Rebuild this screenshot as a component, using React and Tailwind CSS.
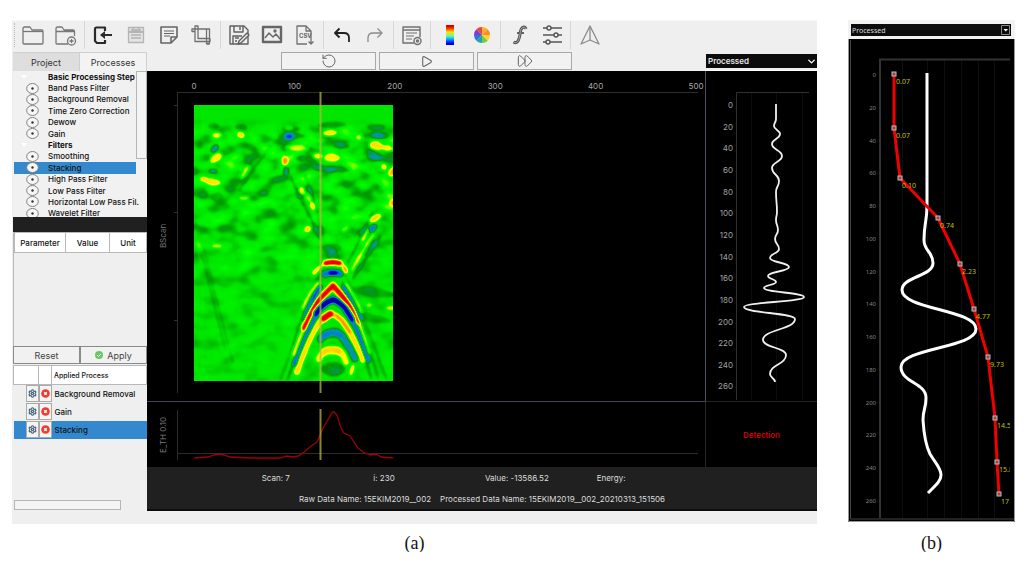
import { useState } from 'react';
import { ChevronDown, RotateCcw, Play, FastForward, Settings } from 'lucide-react';
import clsx from 'clsx';

const PROCESSES = [
    { name: 'Basic Processing Step', group: true },
    { name: 'Band Pass Filter' },
    { name: 'Background Removal' },
    { name: 'Time Zero Correction' },
    { name: 'Dewow' },
    { name: 'Gain' },
    { name: 'Filters', group: true },
    { name: 'Smoothing' },
    { name: 'Stacking' },
    { name: 'High Pass Filter' },
    { name: 'Low Pass Filter' },
    { name: 'Horizontal Low Pass Fil.' },
    { name: 'Wavelet Filter' },
];

const APPLIED = ['Background Removal', 'Gain', 'Stacking'];

const DEPTHS = Array.from({ length: 14 }, (_, i) => i * 20);

const TRACE = [
    [776, 104], [776, 119], [774, 126], [780, 134], [772, 144], [782, 156], [772, 168], [779, 181],
    [776, 192], [777, 212], [776, 220], [778, 230], [775, 239], [779, 249], [770, 258], [789, 267],
    [768, 276], [776, 282], [764, 288], [804, 297], [744, 307], [795, 319], [763, 340], [786, 355],
    [770, 374], [775, 382],
];

const GAIN_TRACE = [
    [927, 73], [927, 205], [924, 240], [933, 263], [902, 290], [976, 329], [901, 367], [926, 398],
    [923, 420],
];

const GAIN_POINTS = [
    { x: 894, y: 74, label: '0.07' },
    { x: 894, y: 128, label: '0.07' },
    { x: 900, y: 178, label: '0.10' },
    { x: 938, y: 218, label: '0.74' },
    { x: 960, y: 264, label: '2.23' },
    { x: 974, y: 309, label: '4.77' },
    { x: 988, y: 357, label: '9.73' },
    { x: 995, y: 418, label: '14.5' },
    { x: 997, y: 462, label: '15.8' },
    { x: 999, y: 494, label: '17' },
];

// x, y, rx, ry, angle, strength (positive = towards red, negative = towards blue)
const BLOBS = [
    [217, 135, 5, 3, 0, 0.35], [241, 135, 4, 3, 20, 0.45], [216, 158, 7, 4, -35, 0.45], [213, 182, 8, 3, 10, 0.36],
    [204, 179, 3, 2, 0, 0.4], [285, 161, 3, 4, 0, 0.55], [297, 148, 12, 3, 5, 0.3], [289, 128, 4, 2, 0, 0.3],
    [330, 133, 7, 3, -5, 0.45], [332, 158, 8, 4, 0, 0.42], [318, 156, 5, 3, 0, 0.38], [359, 137, 3, 3, 0, 0.3],
    [376, 146, 7, 4, 10, 0.45], [387, 148, 6, 3, 15, 0.35], [392, 172, 3, 5, 25, 0.5], [384, 167, 3, 3, 0, 0.45],
    [302, 191, 3, 4, -20, 0.48], [308, 197, 3, 6, -30, 0.33], [313, 206, 3, 4, -25, 0.48], [308, 229, 3, 3, 0, 0.48],
    [375, 218, 7, 3, -25, 0.5], [365, 235, 2, 7, 30, 0.4], [244, 198, 5, 2, 0, 0.35], [245, 172, 2, 8, 30, 0.3],
    [392, 203, 2, 3, 0, 0.5], [345, 229, 4, 2, -30, 0.3], [217, 246, 5, 2, 0, 0.3], [199, 246, 2, 5, -20, 0.3],
    [369, 305, 3, 2, 0, 0.35], [390, 308, 4, 2, 0, 0.35], [352, 370, 2, 6, 15, 0.45], [345, 270, 3, 4, -20, 0.45],
    [215, 148, 5, 3, -50, -0.38], [213, 171, 4, 2, 0, -0.35], [289, 137, 4, 3, 0, -0.42], [286, 171, 3, 4, 0, -0.32],
    [377, 136, 6, 3, 0, -0.28], [373, 228, 5, 3, -50, -0.45], [213, 126, 6, 3, 0, -0.15], [241, 127, 6, 3, 0, -0.18],
    [291, 129, 9, 3, 0, -0.12], [291, 136, 14, 3, 0, -0.14], [332, 125, 14, 3, 0, -0.16], [332, 145, 18, 3, 5, -0.16],
    [376, 127, 9, 3, 0, -0.16], [377, 136, 12, 4, 0, -0.12], [376, 157, 9, 3, 0, -0.18], [217, 197, 6, 5, 0, -0.13],
    [332, 169, 20, 3, 5, -0.18], [300, 158, 5, 3, 0, -0.15], [380, 190, 5, 4, 30, -0.12], [333, 369, 12, 7, 0, -0.2],
    [372, 292, 22, 5, 8, -0.15], [372, 318, 20, 4, 10, -0.12], [333, 248, 9, 4, 0, -0.15],
];

const ECHOES = [
    // faint flanks of the hyperbola
    { d: 'M281 378C295 345 303 300 333 250C350 280 372 340 386 378', w: 3, v: -0.12 },
    { d: 'M288 378C300 350 308 310 318 288', w: 3, v: -0.2 },
    { d: 'M371 378C362 350 356 310 343 282', w: 3, v: -0.18 },
    { d: 'M378 378C370 350 362 322 352 292', w: 2, v: -0.18 },
    { d: 'M292 180C302 205 312 216 320 240', w: 3, v: -0.17 },
    { d: 'M305 175C312 195 318 210 324 240', w: 2, v: -0.17 },
    { d: 'M198 243C208 270 216 320 226 350', w: 2, v: -0.12 },
    { d: 'M204 250C212 280 222 325 233 362', w: 2, v: -0.1 },
    { d: 'M348 262C358 245 364 230 372 214', w: 3, v: -0.18 },
    { d: 'M353 278C364 262 370 252 380 236', w: 3, v: -0.18 },
    { d: 'M352 270C360 256 366 245 373 235', w: 3, v: 0.38 },
    { d: 'M240 190C250 172 262 160 270 146', w: 3, v: -0.12 },
    // main echo, top to bottom
    { d: 'M314 273Q320 266 325 264L341 263L346 271', w: 4, v: 0.4 },
    { d: 'M326 263Q333 261 339 263', w: 6, v: 0.85 },
    { d: 'M325 274Q333 271 340 274', w: 6, v: -0.5 },
    { d: 'M331 273L335 273', w: 4, v: -0.6 },
    { d: 'M303 308Q309 293 318 283', w: 3, v: 0.45 },
    { d: 'M346 284Q354 294 361 312', w: 3, v: 0.42 },
    { d: 'M304 320Q311 300 320 287', w: 4, v: -0.5 },
    { d: 'M343 287Q354 302 360 320', w: 4, v: -0.45 },
    { d: 'M295 354Q306 322 319 299L333 284L345 298Q357 314 368 352', w: 5, v: 0.42 },
    { d: 'M304 328Q313 306 321 298L333 286L345 300Q352 308 357 322', w: 6, v: 0.8 },
    { d: 'M295 364Q307 330 319 309L333 299L345 307Q357 324 368 360', w: 5, v: -0.48 },
    { d: 'M316 313Q324 301 333 300Q342 301 352 319', w: 6, v: -0.65 },
    { d: 'M297 372Q308 338 320 322L331 313L342 320Q354 337 363 360', w: 6, v: 0.48 },
    { d: 'M324 318L330 314', w: 7, v: 0.8 },
    { d: 'M337 315L350 332', w: 4, v: 0.35 },
    { d: 'M321 339Q332 326 342 336Q350 347 355 358', w: 7, v: -0.36 },
    { d: 'M325 335L339 335', w: 6, v: -0.16 },
    { d: 'M319 359Q324 348 332 349Q342 349 346 362', w: 7, v: 0.36 },
    { d: 'M325 352L338 351', w: 8, v: 0.25 },
];

// Curve through turning points with a vertical tangent at each one
const tracePath = (points) =>
    points
        .map(([x, y], i) => {
            if (i === 0) return `M${x} ${y}`;
            const [px, py] = points[i - 1];
            const mid = (py + y) / 2;
            return `C${px} ${mid} ${x} ${mid} ${x} ${y}`;
        })
        .join('');

const tone = (v) => (v > 0 ? '#fff' : '#000');

const icons = {
    open: (
        <g stroke="#777" strokeWidth="1.3">
            <path d="M1 19V4.500q0-1.500 1.500-1.500H8l2 3h9.500q1.500 0 1.500 1.500V19q0 1-1 1H2q-1 0-1-1z" />
            <path d="M1 7.500h20" />
        </g>
    ),
    add: (
        <g stroke="#777" strokeWidth="1.300">
            <path d="M13 20H2q-1 0-1-1V4.500Q1 3 2.500 3H7l2 3h9q1.500 0 1.500 1.500V12M1 7.500h18" />
            <circle cx="16.500" cy="17" r="4" />
            <path d="M14.500 17h4M16.500 15v4" />
        </g>
    ),
    exit: (
        <g stroke="#2b2b2b" strokeWidth="2.200">
            <path d="M13 7V3.500H4Q3 3.500 3 5v12l2 2h8v-3" />
            <path d="M9 11h11" strokeWidth="2" />
            <path d="M13 7l-5 4 5 4z" fill="#2b2b2b" stroke="none" />
        </g>
    ),
    save: (
        <g stroke="#b4b4b4" strokeWidth="1.300">
            <path d="M3.500 3.500h15v15h-15z" fill="#e3e3e3" />
            <path d="M6 6h10M8 4v3h6V4M6 11h10M6 14h10" />
            <path d="M3 8h16" strokeWidth="2" />
        </g>
    ),
    note: (
        <g stroke="#666" strokeWidth="1.600">
            <path d="M3 3h16v10l-6 6H3z" />
            <path d="M19 13h-6v6" />
            <path d="M6 7h10M6 9.500h10M6 12h6" strokeWidth="1.200" />
        </g>
    ),
    crop: (
        <g stroke="#707070" strokeWidth="1.300">
            <path d="M4 2h3v12.500h12v3H4zM1 5h14.500v14.500h3V5H1z" />
            <path d="M1 5v2.500h3M15.500 20h3" />
        </g>
    ),
    saveEdit: (
        <g stroke="#606060" strokeWidth="1.400">
            <path d="M2 2h14l4 4v14H2z" />
            <path d="M6 2v6h9V2M12 3v3M5 20v-8h9" />
            <path d="M19 9l-8 8-1 3 3-1 8-8z" fill="#e8e8e8" />
            <path d="M7 14h4M7 17h2" />
        </g>
    ),
    image: (
        <g stroke="#666" strokeWidth="1.400">
            <path d="M2 3h18v15H2z" strokeWidth="2.400" />
            <path d="M4 14l4-5 4 4 3-3 4 5" />
            <circle cx="14" cy="7" r="1" />
        </g>
    ),
    csv: (
        <g stroke="#707070" strokeWidth="1.300">
            <path d="M13 20H3V2h9l5 5v7M12 2v5h5" />
            <text x="5" y="14" fontSize="6" fontWeight="700" fill="#666" stroke="none">CSV</text>
            <path d="M17 14v6M14.500 17.500L17 20l2.500-2.500" />
        </g>
    ),
    undo: (
        <g stroke="#222" strokeWidth="1.800">
            <path d="M5 9h8q5 0 5 5v4" />
            <path d="M8.500 4.500L4 9l4.500 4.500" />
        </g>
    ),
    redo: (
        <g stroke="#8a8a8a" strokeWidth="1.300">
            <path d="M17 9H9q-5 0-5 5v4" />
            <path d="M13.500 4.500L18 9l-4.500 4.500" />
        </g>
    ),
    form: (
        <g stroke="#707070" strokeWidth="1.400">
            <path d="M13 19H2V3h17v10M2 6h17" />
            <path d="M5 9h11M5 12h8M5 15h6" strokeWidth="1.200" />
            <circle cx="16.500" cy="17" r="3.500" />
            <circle cx="16.500" cy="17" r="1" />
        </g>
    ),
    colorbar: (
        <g>
            <defs>
                <linearGradient id="jet" x1="0" y1="0" x2="0" y2="1">
                    <stop offset="0" stopColor="#b00000" />
                    <stop offset=".15" stopColor="#ff2000" />
                    <stop offset=".35" stopColor="#ffe000" />
                    <stop offset=".55" stopColor="#60ffa0" />
                    <stop offset=".72" stopColor="#00a0ff" />
                    <stop offset=".9" stopColor="#0000ff" />
                    <stop offset="1" stopColor="#0000b0" />
                </linearGradient>
            </defs>
            <path d="M8 1h8v20H8z" fill="url(#jet)" />
        </g>
    ),
    wheel: (
        <g>
            <path d="M11 11V3a8 8 0 0 1 5.700 2.300z" fill="#ffb02e" />
            <path d="M11 11l5.700-5.700A8 8 0 0 1 19 11z" fill="#ff8a1f" />
            <path d="M11 11h8a8 8 0 0 1-2.300 5.700z" fill="#ffd52e" />
            <path d="M11 11l5.700 5.700A8 8 0 0 1 11 19z" fill="#7ac943" />
            <path d="M11 11v8a8 8 0 0 1-5.700-2.300z" fill="#1fa8a0" />
            <path d="M11 11l-5.700 5.700A8 8 0 0 1 3 11z" fill="#2f6fe0" />
            <path d="M11 11H3a8 8 0 0 1 2.300-5.700z" fill="#7b3fd0" />
            <path d="M11 11L5.300 5.300A8 8 0 0 1 11 3z" fill="#f0443a" />
        </g>
    ),
    func: (
        <g stroke="#555">
            <path d="M18 5q-1-3-3.500-1.500C12 5 12.500 9 11.500 13S9 20 5.500 18" strokeWidth="3" />
            <path d="M9 9h7" strokeWidth="1.800" />
            <path d="M18 5q-1-3-3.500-1.500C12 5 12.500 9 11.500 13S9 20 5.500 18" stroke="#bbb" strokeWidth=".800" />
        </g>
    ),
    sliders: (
        <g stroke="#555" strokeWidth="1.400">
            <path d="M2 4h4M10 4h11M2 11h11M17 11h4M2 18h3M9 18h12" />
            <circle cx="8" cy="4" r="2" />
            <circle cx="15" cy="11" r="2" />
            <circle cx="7" cy="18" r="2" />
        </g>
    ),
    nav: (
        <g stroke="#8c8c8c" strokeWidth="1.300">
            <path d="M12 2L3 20l9-4 9 4z" />
            <path d="M12 2v14" />
        </g>
    ),
};

const TOOL_GROUPS = [
    [['open', 'Open'], ['add', 'New project']],
    [['exit', 'Export'], ['save', 'Save'], ['note', 'Notes'], ['crop', 'Crop']],
    [['saveEdit', 'Save as'], ['image', 'Save image'], ['csv', 'Save CSV']],
    [['undo', 'Undo'], ['redo', 'Redo']],
    [['form', 'Header']],
    [['colorbar', 'Colour bar'], ['wheel', 'Colour map']],
    [['func', 'Function'], ['sliders', 'Settings']],
    [['nav', 'Navigation']],
];

const Toolbar = () => (
    <div className="flex h-8 items-center border-t border-[#f8f8f8] pb-[3px]">
        <div className="ml-[2px] h-6 w-[3px] border-l border-dotted border-[#bbb]"></div>
        {TOOL_GROUPS.map((group, i) => (
            <div
                key={i}
                className={clsx('flex h-[28px] items-center gap-px', i > 0 && 'ml-[2px] border-l border-[#d6d6d6] pl-[2px]')}
            >
                {group.map(([name, label]) => (
                    <button key={name} aria-label={label} className="flex w-8 justify-center">
                        <svg width="22" height="22" viewBox="0 0 22 22" fill="none" strokeLinejoin="round">
                            {icons[name]}
                        </svg>
                    </button>
                ))}
            </div>
        ))}
    </div>
);

const ProcessTree = ({ selected, onSelect }) => (
    <div className="flex h-[146px] overflow-hidden bg-[#f1f1f1]">
        <ul className="ml-px flex h-[148px] min-w-0 flex-1 flex-col">
            {PROCESSES.map(({ name, group }) => (
                <li key={name} className="min-h-0 flex-1">
                    <button
                        onClick={() => onSelect(name)}
                        className={clsx(
                            'flex h-full w-full items-center whitespace-nowrap text-left',
                            group ? 'font-bold' : 'font-medium',
                            selected === name && 'bg-[#3489ce]'
                        )}
                    >
                        <span className="flex w-[34px] shrink-0 justify-end pr-[9px]">
                            {group ? (
                                <svg width="6" height="6" viewBox="0 0 6 6" className="mr-[12px]">
                                    <path d="M0 1h6L3 5z" fill="#fff" />
                                </svg>
                            ) : (
                                <svg width="13" height="11" viewBox="0 0 13 11" className="shrink-0">
                                    <ellipse cx="6.5" cy="5.500" rx="5.800" ry="5" fill="#f6f6f6" stroke="#808080" />
                                    <circle cx="6.500" cy="5.500" r="1.200" fill="#333" />
                                </svg>
                            )}
                        </span>
                        {name}
                    </button>
                </li>
            ))}
        </ul>
        <div className="w-[11px]">
            <div className="h-[88px] border border-[#b5b5b5] bg-[#f4f4f4]"></div>
        </div>
    </div>
);

const Sidebar = () => {
    const [tab, setTab] = useState('Processes');
    const [selected, setSelected] = useState('Stacking');

    return (
        <aside className="flex flex-col pl-px">
            <div role="tablist" className="grid h-[19px] grid-cols-2 text-[9px] text-[#333]">
                {['Project', 'Processes'].map(name => (
                    <button
                        key={name}
                        role="tab"
                        aria-selected={tab === name}
                        onClick={() => setTab(name)}
                        className={clsx(
                            'border-r border-t border-[#cfcfcf]',
                            tab === name ? 'bg-[#f3f3f3]' : 'bg-[#dedede]'
                        )}
                    >
                        {name}
                    </button>
                ))}
            </div>

            <ProcessTree selected={selected} onSelect={setSelected} />
            <div className="h-[15px] bg-[#202020]"></div>

            {/* Parameters */}
            <div className="h-[114px] border-l border-[#b8b8b8]">
                <table className="w-full table-fixed border-collapse">
                    <thead>
                        <tr className="h-[20px] bg-white">
                            <th className="w-[51px] border border-[#b8b8b8] font-medium">Parameter</th>
                            <th className="border border-[#b8b8b8] font-medium">Value</th>
                            <th className="w-[37px] border border-[#b8b8b8] font-medium">Unit</th>
                        </tr>
                    </thead>
                </table>
            </div>
            <div className="grid h-[18px] grid-cols-2 text-[9px] text-[#444]">
                <button className="border border-[#8a8a8a] bg-[#f1f1f1]">Reset</button>
                <button className="flex items-center justify-center gap-1 border border-[#8a8a8a] bg-[#f1f1f1]">
                    <svg width="8" height="8" viewBox="0 0 8 8">
                        <circle cx="4" cy="4" r="4" fill="#6cc56c" />
                        <path d="M2 4l1.500 1.500L6 3" fill="none" stroke="#e8ffe8" />
                    </svg>
                    Apply
                </button>
            </div>

            {/* Applied processes */}
            <table className="mt-px w-full table-fixed border-collapse">
                <thead>
                    <tr className="h-[19px] bg-white text-[7px]">
                        <th className="w-[25px] border border-[#b8b8b8]"></th>
                        <th className="w-[13px] border border-[#b8b8b8]"></th>
                        <th className="border border-[#b8b8b8] pl-[2px] text-left font-medium">Applied Process</th>
                    </tr>
                </thead>
                <tbody>
                    {APPLIED.map(name => (
                        <tr key={name} className={clsx('h-[18px]', name === 'Stacking' && 'bg-[#3489ce]')}>
                            <td className="p-0">
                                <button
                                    aria-label={`Edit ${name}`}
                                    className="ml-auto flex h-[17px] w-[13px] items-center justify-center border border-[#aaa] bg-[#f4f4f4]"
                                >
                                    <Settings className="h-[9px] w-[9px] text-[#3f6078]" strokeWidth={3} />
                                </button>
                            </td>
                            <td className="p-0">
                                <button
                                    aria-label={`Remove ${name}`}
                                    className="flex h-[17px] w-[13px] items-center justify-center border border-[#aaa] bg-[#f4f4f4]"
                                >
                                    <svg width="9" height="9" viewBox="0 0 9 9">
                                        <circle cx="4.500" cy="4.500" r="4.300" fill="#f6392b" />
                                        <path d="M3.300 3.300l2.400 2.400M5.700 3.300L3.300 5.700" stroke="#fff" strokeWidth="1.600" />
                                    </svg>
                                </button>
                            </td>
                            <td className="p-0 pl-[3px] font-medium">{name}</td>
                        </tr>
                    ))}
                </tbody>
            </table>
            <div className="mb-[14px] ml-px mt-auto h-[10px] w-[107px] border border-[#b5b5b5] bg-[#f4f4f4]"></div>
        </aside>
    );
};

const BScan = () => (
    <svg viewBox="147 71 559 330" className="block h-auto w-full bg-black">
        <defs>
            {/* grey level -> radar palette */}
            <filter id="palette" x="0" y="0" width="1" height="1" colorInterpolationFilters="sRGB">
                <feGaussianBlur stdDeviation="1.2" edgeMode="duplicate" />
                <feComponentTransfer>
                    <feFuncR type="table" tableValues=".3 .08 0 0 0 0 0 0 1 1 1 .95 .85" />
                    <feFuncG type="table" tableValues="0 0 0 .45 .6 .6 .9 1 1 .85 .5 0 0" />
                    <feFuncB type="table" tableValues=".4 .5 .85 .9 .65 0 0 0 0 0 0 0 0" />
                    <feFuncA type="linear" slope="0" intercept="1" />
                </feComponentTransfer>
            </filter>
            <filter id="speckle" x="0" y="0" width="1" height="1" colorInterpolationFilters="sRGB">
                <feTurbulence type="fractalNoise" baseFrequency=".05 .08" numOctaves="2" seed="7" />
                <feColorMatrix values="1.3 0 0 0 -.15  1.3 0 0 0 -.15  1.3 0 0 0 -.15  0 0 0 0 1" />
            </filter>
            <linearGradient id="fade" x1="0" y1="0" x2="0" y2="1">
                <stop offset=".05" stopColor="#000" />
                <stop offset=".12" stopColor="#606060" />
                <stop offset=".4" stopColor="#505050" />
                <stop offset=".7" stopColor="#202020" />
            </linearGradient>
            <mask id="speckleMask">
                <rect x="194" y="105" width="199" height="276" fill="url(#fade)" />
            </mask>
            <clipPath id="scanArea">
                <rect x="194" y="105" width="199" height="276" />
            </clipPath>
        </defs>

        <g stroke="#2c2c2c">
            <path d="M177.500 393V92.500H698" fill="none" />
            <path d="M174 105.500h3M174 212.500h3M174 320.500h3" />
        </g>
        <g fill="#a8a8a8" fontSize="8" textAnchor="middle">
            {[0, 100, 200, 300, 400, 500].map((n, i) => (
                <text key={n} x={194 + i * 100.4} y="89">{n}</text>
            ))}
            <text transform="translate(166 236) rotate(-90)" fill="#777">BScan</text>
        </g>

        <g clipPath="url(#scanArea)">
            <g filter="url(#palette)">
                <rect x="194" y="105" width="199" height="276" fill="#808080" />
                <g mask="url(#speckleMask)">
                    <rect x="194" y="105" width="199" height="276" filter="url(#speckle)" />
                </g>
                {BLOBS.map(([x, y, rx, ry, angle, v], i) => (
                    <ellipse
                        key={i}
                        rx={rx}
                        ry={ry}
                        transform={`translate(${x} ${y}) rotate(${angle})`}
                        fill={tone(v)}
                        fillOpacity={Math.abs(v)}
                    />
                ))}
                {ECHOES.map(({ d, w, v }) => (
                    <path
                        key={d}
                        d={d}
                        fill="none"
                        stroke={tone(v)}
                        strokeOpacity={Math.abs(v)}
                        strokeWidth={w}
                        strokeLinecap="round"
                        strokeLinejoin="round"
                    />
                ))}
            </g>
        </g>

        <path d="M320.500 92v301" stroke="#b4b440" strokeWidth="2" strokeOpacity=".75" />
        <path d="M705.500 71v330" stroke="#4a5260" />
    </svg>
);

const AScan = () => (
    <svg viewBox="706 71 111 330" className="block h-auto w-full bg-black">
        <path d="M736.500 400V92.500H809" fill="none" stroke="#303030" />
        <path d="M751.500 93v307M776.500 93v307M802.500 93v307" stroke="#0c0c0c" />
        <g fill="#a0a0a0" fontSize="8" textAnchor="end">
            {DEPTHS.map((n, i) => (
                <text key={n} x="733" y={108 + i * 21.65}>{n}</text>
            ))}
        </g>
        <path d={tracePath(TRACE)} fill="none" stroke="#f0f0f0" strokeWidth="1.800" />
    </svg>
);

const EnergyPlot = () => (
    <svg viewBox="147 401 559 66" className="block h-auto w-full bg-black">
        <path d="M147 401.500h559" stroke="#3f4856" />
        <path d="M705.500 402v65" stroke="#262626" />
        <path d="M177.500 410v50M177 453.500h521" stroke="#2c2c2c" />
        <text transform="translate(166 435) rotate(-90)" fill="#777" fontSize="8" textAnchor="middle">E_TH 0.10</text>
        <path
            d="M194 458L208 457L214 455L219 454L224 455L230 457L250 458L280 458L287 456L293 457L299 456L303 453L311 446L317 442L320 435L323 428L329 418Q333 410 334 412L337 415L341 428L344 433L350 436L358 448L363 452L370 455L376 454L381 457L393 458"
            fill="none"
            stroke="#a00000"
            strokeWidth="1.300"
        />
        <path d="M320.500 409v51" stroke="#b4b440" strokeWidth="2" strokeOpacity=".75" />
    </svg>
);

const GainPlot = () => (
    <svg viewBox="848 39 167 483" className="block h-auto w-full bg-black font-['Noto_Sans',sans-serif]">
        <defs>
            <clipPath id="gainArea">
                <rect x="880" y="59" width="130" height="459" />
            </clipPath>
        </defs>
        <path d="M850.500 40v479H1014" fill="none" stroke="#444" />
        <path d="M848.500 39v482.500h166V39" fill="none" stroke="#999" />
        <path d="M927.500 60v458M902.500 60v458M944.500 60v458M961.500 60v458M978.500 60v458M994.500 60v458" stroke="#0e0e0e" />
        <path d="M880 518V59.500h130" fill="none" stroke="#333" strokeWidth="2" />
        <g fill="#858585" fontSize="6" textAnchor="end">
            {DEPTHS.map((n, i) => (
                <text key={n} x="876" y={77 + i * 32.75}>{n}</text>
            ))}
        </g>
        <path
            d={tracePath(GAIN_TRACE) + 'C924 436 926 446 930 454C936 464 941 468 941 475C941 481 936 485 928 493'}
            fill="none"
            stroke="#fff"
            strokeWidth="3"
        />
        <polyline points={GAIN_POINTS.map(p => `${p.x},${p.y}`).join(' ')} fill="none" stroke="#f00000" strokeWidth="3" />
        <g clipPath="url(#gainArea)" fill="#c0c000" fontSize="7">
            {GAIN_POINTS.map(p => (
                <text key={p.y} x={p.x + 2} y={p.y + 10}>{p.label}</text>
            ))}
        </g>
        {GAIN_POINTS.map(p => (
            <rect key={p.y} x={p.x - 2} y={p.y - 2} width="4" height="4" fill="#d03030" stroke="#9cc" />
        ))}
    </svg>
);

const StatusBar = () => (
    <div className="bg-[#202020] text-[#dcdcdc]">
        <div className="grid h-[22px] grid-cols-6 items-center">
            <span className="col-start-2 pl-[3px]">Scan: 7</span>
            <span className="pl-[3px]">i: 230</span>
            <span className="pl-[3px]">Value: -13586.52</span>
            <span className="pl-[3px]">Energy:</span>
        </div>
        <div className="flex h-[22px] items-center justify-center gap-[9px] border-b-2 border-[#0c0c0c]">
            <span>Raw Data Name: 15EKIM2019__002</span>
            <span>Processed Data Name: 15EKIM2019__002_20210313_151506</span>
        </div>
    </div>
);

const App = () => (
    <main className="grid grid-cols-[805fr_167fr] gap-x-[31px] bg-white pl-3 pr-[15px] pt-5 font-['Inter',sans-serif] text-[8px] leading-none text-[#111]">
        <figure>
            <div className="bg-[#efefef]">
                <Toolbar />
                <div className="grid grid-cols-[135px_1fr]">
                    <Sidebar />
                    <div className="grid grid-cols-[559fr_111fr] content-start pb-[13px]">
                        <div className="flex h-[19px] justify-center gap-[3px] pb-px text-[#666]">
                            <button aria-label="Restart" className="flex w-[95px] items-center justify-center border border-[#a8a8a8] bg-[#f2f2f2]">
                                <RotateCcw className="h-[16px] w-[16px]" strokeWidth={1.500} />
                            </button>
                            <button aria-label="Play" className="flex w-[95px] items-center justify-center border border-[#a8a8a8] bg-[#f2f2f2]">
                                <Play className="h-[13px] w-[13px]" />
                            </button>
                            <button aria-label="Fast forward" className="flex w-[95px] items-center justify-center border border-[#a8a8a8] bg-[#f2f2f2]">
                                <FastForward className="h-[16px] w-[16px]" strokeWidth={1.500} />
                            </button>
                        </div>
                        <div className="border-b border-white pb-[2px] pt-[2px]">
                            <div className="relative">
                                <select
                                    aria-label="Trace"
                                    className="block h-[14px] w-full appearance-none bg-[#0c0c0c] pl-[2px] font-semibold text-[#e8e8e8]"
                                >
                                    <option>Processed</option>
                                </select>
                                <ChevronDown className="pointer-events-none absolute right-0 top-[2px] h-[11px] w-[11px] text-white" strokeWidth={3} />
                            </div>
                        </div>
                        <BScan />
                        <AScan />
                        <EnergyPlot />
                        <div className="flex items-center justify-center border-t border-[#222] bg-black font-medium text-[#e00000]">
                            Detection
                        </div>
                        <div className="col-span-2">
                            <StatusBar />
                        </div>
                    </div>
                </div>
            </div>
            <figcaption className="pt-[10px] text-center font-['Liberation_Serif',serif] text-lg leading-none">(a)</figcaption>
        </figure>

        <figure>
            <div className="bg-[#f2f2f2]">
                <div className="px-[3px] pb-[3px] pt-1">
                    <div className="relative pr-px">
                        <select
                            aria-label="Gain trace"
                            className="block h-[12px] w-full appearance-none bg-[#0c0c0c] px-px font-['Noto_Sans',sans-serif] text-[7px] text-[#ddd]"
                        >
                            <option>Processed</option>
                        </select>
                        <svg className="pointer-events-none absolute right-px top-0" width="10" height="12" viewBox="0 0 10 12">
                            <path d="M.5 1.500h8v9h-8z" fill="none" stroke="#888" />
                            <path d="M2.500 5h4.500l-2.200 2.500z" fill="#fff" />
                        </svg>
                    </div>
                </div>
                <GainPlot />
            </div>
            <figcaption className="pt-3 text-center font-['Liberation_Serif',serif] text-lg leading-none">(b)</figcaption>
        </figure>
    </main>
);

export default App;
